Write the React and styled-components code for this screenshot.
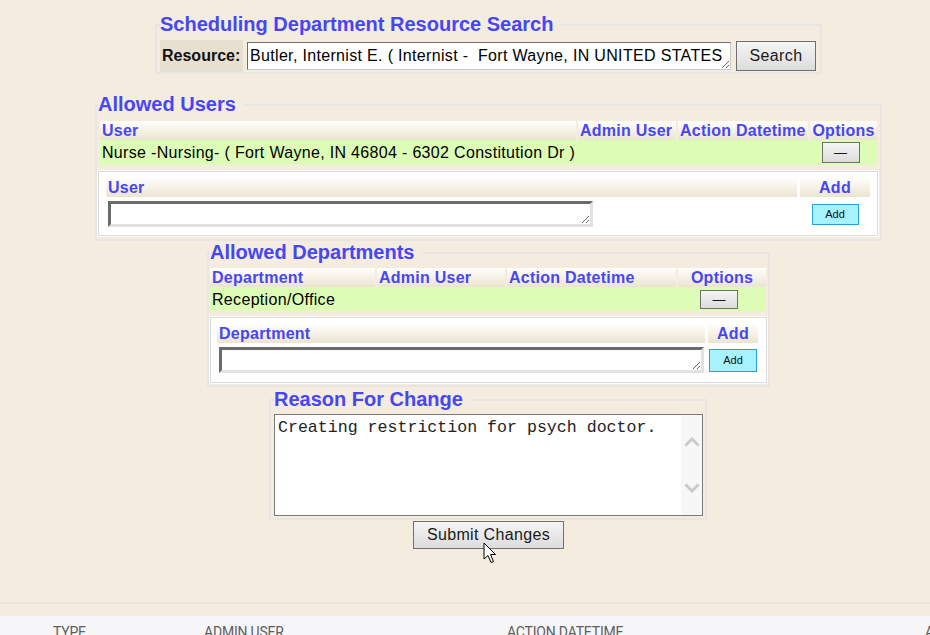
import React from "react";
import styled, { createGlobalStyle } from "styled-components";

const GlobalStyle = createGlobalStyle`
  html, body { margin: 0; padding: 0; background: #f3ecdf; overflow: hidden; }
  body { font-family: "Liberation Sans", Arial, sans-serif; color: #000; }
`;

const Page = styled.div`
  position: relative;
  width: 977px;
  min-height: 635px;
  padding-top: 13px;
  display: flex;
  flex-direction: column;
  align-items: center;
  box-sizing: border-box;
`;

const Fieldset = styled.fieldset`
  box-sizing: border-box;
  width: ${(p) => p.$w}px;
  margin: ${(p) => p.$mt || 0}px 0 0 ${(p) => p.$ml || 0}px;
  padding: ${(p) => p.$pad};
  border: 2px solid #e8e6e2;
  min-width: 0;
`;

const Legend = styled.legend`
  padding: 0 8px 0 0;
  margin-left: ${(p) => p.$ml || 0}px;
  font: bold 20px/23px "Liberation Sans", Arial, sans-serif;
  color: #4646f6;
`;

const SearchRow = styled.div`
  display: flex;
  align-items: center;
  height: 32px;
`;

const ResLabel = styled.div`
  width: 83px;
  height: 32px;
  box-sizing: border-box;
  padding-left: 2px;
  background: #e7dfcf;
  font: bold 16px/32px "Liberation Sans", Arial, sans-serif;
  color: #111;
`;

const ResInput = styled.textarea`
  box-sizing: border-box;
  margin-left: 4px;
  width: 484px;
  height: 28px;
  padding: 3px 2px;
  border: 1px solid;
  border-color: #6d6d6d #c9c9c9 #c9c9c9 #6d6d6d;
  background: #fff;
  font: 16px/20px "Liberation Sans", Arial, sans-serif;
  letter-spacing: 0.33px;
  color: #000;
  white-space: pre;
  overflow: hidden;
`;

const GreyButton = styled.button`
  box-sizing: border-box;
  width: ${(p) => p.$w}px;
  height: ${(p) => p.$h}px;
  margin: ${(p) => p.$m || 0};
  padding: 0;
  border: 1px solid #6f6f6f;
  background: linear-gradient(#f5f5f5, #dcdcdc);
  font: ${(p) => p.$fs || 16}px "Liberation Sans", Arial, sans-serif;
  letter-spacing: ${(p) => (p.$fs ? 0 : 0.35)}px;
  color: #1a1a1a;
  display: flex;
  align-items: center;
  justify-content: center;
  white-space: nowrap;
`;

const AddButton = styled.button`
  box-sizing: border-box;
  width: ${(p) => p.$w}px;
  height: ${(p) => p.$h}px;
  padding: 0;
  border: 1px solid #2a9fd8;
  background: #a7f2ff;
  font: 11px "Liberation Sans", Arial, sans-serif;
  color: #111;
`;

const Grid = styled.div`
  display: grid;
  grid-template-columns: ${(p) => p.$cols};
  column-gap: ${(p) => p.$gap}px;
`;

const HeadCell = styled.div`
  height: 19px;
  line-height: 19px;
  box-sizing: border-box;
  padding-left: ${(p) => (p.$center ? 0 : 2)}px;
  text-align: ${(p) => (p.$center ? "center" : "left")};
  font-weight: bold;
  font-size: 16px;
  letter-spacing: 0.25px;
  color: #4646f6;
  background: linear-gradient(#fffefc, #ebe4d1);
  white-space: nowrap;
  overflow: hidden;
`;

const DataRow = styled(Grid)`
  background: #ddfdb6;
  height: ${(p) => p.$h}px;
  align-items: center;
`;

const DataCell = styled.div`
  padding: ${(p) => (p.$center ? "0 6px 0 0" : "1px 0 0 2px")};
  font-size: 16px;
  letter-spacing: 0.32px;
  white-space: nowrap;
  display: flex;
  justify-content: ${(p) => (p.$center ? "center" : "flex-start")};
`;

const AddBox = styled.div`
  background: #fff;
  border: 1px solid #dcdcdc;
  box-shadow: 0 0 0 1px #fbfbfb;
  margin: ${(p) => p.$m};
  padding: ${(p) => p.$pad};
`;

const AddRow = styled(Grid)`
  padding-top: 4px;
  align-items: center;
`;

const AddCell = styled.div`
  display: flex;
  justify-content: ${(p) => (p.$center ? "center" : "flex-start")};
  padding-left: ${(p) => (p.$center ? 0 : 2)}px;
`;

const PickInput = styled.textarea`
  box-sizing: border-box;
  width: 485px;
  height: 26px;
  padding: 2px;
  border: 3px solid;
  border-color: #6b6b6b #e2e2e2 #e2e2e2 #6b6b6b;
  background: #fff;
  font: 14px "Liberation Sans", Arial, sans-serif;
  overflow: hidden;
  display: block;
`;

const ReasonBox = styled.div`
  display: flex;
  width: 429px;
  height: 102px;
  box-sizing: border-box;
  border: 1px solid #7a7a7a;
  background: #fff;
`;

const ReasonText = styled.textarea`
  flex: 1;
  border: none;
  outline: none;
  resize: none;
  padding: 3px 3px;
  margin: 0;
  font: 16.6px/19px "Liberation Mono", "Courier New", monospace;
  color: #222;
  background: transparent;
  overflow: hidden;
`;

const FakeScroll = styled.div`
  width: 21px;
  background: #f7f7f7;
  display: flex;
  flex-direction: column;
  justify-content: space-between;
  align-items: center;
  padding: 22px 0 22px;
  box-sizing: border-box;
`;

const Footer = styled.div`
  align-self: stretch;
  margin-top: 53px;
  border-top: 2px solid #e8e5e0;
  padding-top: 12px;
`;

const FooterBand = styled.div`
  background: #f6f6f9;
  height: 40px;
  display: grid;
  grid-template-columns: 151px 303px 418px 1fr;
  padding: 8px 0 0 53px;
  box-sizing: border-box;
  font: 14px "Roboto", "Liberation Sans", sans-serif;
  color: #5e5e5e;
  letter-spacing: -0.2px;
  white-space: nowrap;
`;

const Cursor = styled.svg`
  position: absolute;
  left: 483px;
  top: 542px;
`;

const Chevron = ({ up }) => (
  <svg width="16" height="10" viewBox="0 0 16 10">
    <path
      d={up ? "M1.5 8.5 L8 2 L14.5 8.5" : "M1.5 1.5 L8 8 L14.5 1.5"}
      fill="none"
      stroke="#cbcbcb"
      strokeWidth="3"
    />
  </svg>
);

export default function App() {
  return (
    <>
      <GlobalStyle />
      <Page>
        <Fieldset $w={667} $pad="4px 3px 0 3px">
          <Legend>Scheduling Department Resource Search</Legend>
          <SearchRow>
            <ResLabel>Resource:</ResLabel>
            <ResInput
              wrap="off"
              readOnly
              defaultValue="Butler, Internist E. ( Internist -  Fort Wayne, IN UNITED STATES"
            />
            <GreyButton $w={80} $h={30} $m="0 0 0 5px">Search</GreyButton>
          </SearchRow>
        </Fieldset>

        <Fieldset $w={787} $mt={19} $pad="5px 3px 3px 3px">
          <Legend $ml={-2}>Allowed Users</Legend>
          <Grid $cols="476px 98px 130px 67px" $gap={2}>
            <HeadCell>User</HeadCell>
            <HeadCell>Admin User</HeadCell>
            <HeadCell>Action Datetime</HeadCell>
            <HeadCell $center>Options</HeadCell>
          </Grid>
          <DataRow $cols="476px 98px 130px 67px" $gap={2} $h={25}>
            <DataCell>Nurse -Nursing- ( Fort Wayne, IN 46804 - 6302 Constitution Dr )</DataCell>
            <DataCell />
            <DataCell />
            <DataCell $center>
              <GreyButton $w={38} $h={21} $fs={13}>—</GreyButton>
            </DataCell>
          </DataRow>
          <AddBox $m="6px -1px 0 -2px" $pad="6px 7px 8px 7px">
            <Grid $cols="691px 70px" $gap={3}>
              <HeadCell>User</HeadCell>
              <HeadCell $center>Add</HeadCell>
            </Grid>
            <AddRow $cols="691px 70px" $gap={3}>
              <AddCell><PickInput /></AddCell>
              <AddCell $center><AddButton $w={47} $h={21}>Add</AddButton></AddCell>
            </AddRow>
          </AddBox>
        </Fieldset>

        <Fieldset $w={563} $pad="4px 2px 2px 1px">
          <Legend>Allowed Departments</Legend>
          <Grid $cols="165px 128px 169px 88px" $gap={2}>
            <HeadCell>Department</HeadCell>
            <HeadCell>Admin User</HeadCell>
            <HeadCell>Action Datetime</HeadCell>
            <HeadCell $center>Options</HeadCell>
          </Grid>
          <DataRow $cols="165px 128px 169px 88px" $gap={2} $h={24}>
            <DataCell>Reception/Office</DataCell>
            <DataCell />
            <DataCell />
            <DataCell $center>
              <GreyButton $w={38} $h={19} $fs={13}>—</GreyButton>
            </DataCell>
          </DataRow>
          <AddBox $m="6px -1px 0 0" $pad="6px 8px 9px 6px">
            <Grid $cols="488px 50px" $gap={3}>
              <HeadCell>Department</HeadCell>
              <HeadCell $center>Add</HeadCell>
            </Grid>
            <AddRow $cols="488px 50px" $gap={3}>
              <AddCell><PickInput /></AddCell>
              <AddCell $center><AddButton $w={48} $h={23}>Add</AddButton></AddCell>
            </AddRow>
          </AddBox>
        </Fieldset>

        <Fieldset $w={438} $mt={1} $ml={-1} $pad="3px 2px 2px 3px">
          <Legend>Reason For Change</Legend>
          <ReasonBox>
            <ReasonText readOnly defaultValue="Creating restriction for psych doctor." />
            <FakeScroll>
              <Chevron up />
              <Chevron />
            </FakeScroll>
          </ReasonBox>
        </Fieldset>

        <GreyButton $w={151} $h={28} $m="1px 0 0 0">Submit Changes</GreyButton>

        <Footer>
          <FooterBand>
            <span>TYPE</span>
            <span>ADMIN USER</span>
            <span>ACTION DATETIME</span>
            <span>ACTION</span>
          </FooterBand>
        </Footer>

        <Cursor width="14" height="22" viewBox="0 0 14 22">
          <path
            d="M1 1 L1 17 L5 13.5 L8 20.5 L10.5 19.5 L7.5 12.5 L12.5 12.5 Z"
            fill="#fff"
            stroke="#000"
            strokeWidth="1"
            strokeLinejoin="round"
          />
        </Cursor>
      </Page>
    </>
  );
}
